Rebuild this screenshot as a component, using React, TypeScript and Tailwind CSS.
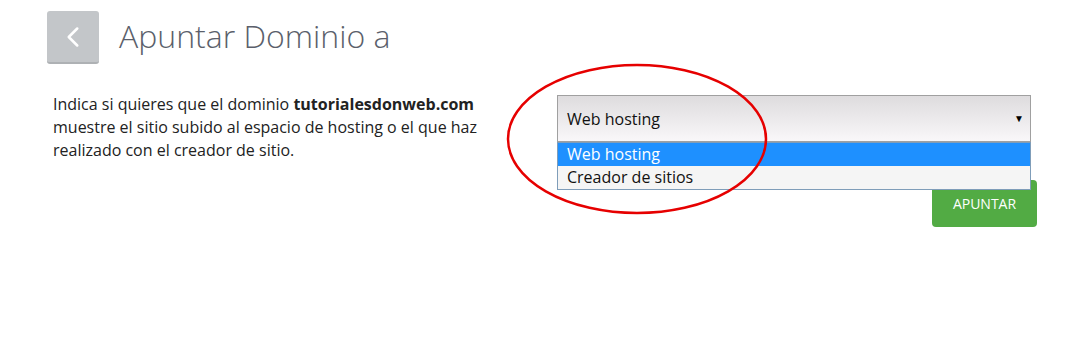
import { ChevronLeft } from "lucide-react";

export default function App() {
  return (
    <div className="relative w-[1068px] h-[364px] bg-white font-['Open_Sans',sans-serif] overflow-hidden">
      {/* header */}
      <div className="flex items-center gap-5 pl-[47px] pt-[11px]">
        <button className="w-[52px] h-[53px] rounded-[3px] bg-[#c3c6c9] border-b-2 border-[#aeb1b4] flex items-center justify-center">
          <ChevronLeft size={34} strokeWidth={1.8} className="text-white" />
        </button>
        <h1 className="text-[32px] font-light text-[#5b5f6b] leading-none -mt-1">Apuntar Dominio a</h1>
      </div>

      {/* body */}
      <div className="flex pl-[53px] pt-[29px]">
        <p className="w-[440px] text-[16px] leading-[23px] text-[#222]">
          Indica si quieres que el dominio <strong className="font-bold">tutorialesdonweb.com</strong> muestre el sitio subido al espacio de hosting o el que haz realizado con el creador de sitio.
        </p>
        <div className="ml-[64px] mt-[2px] w-[480px] flex flex-col items-end">
          <div className="relative w-[474px] self-start">
            <div className="h-[47px] border border-[#a0a0a0] bg-gradient-to-b from-[#dedcde] to-[#f9f7f9] flex items-center justify-between pl-[9px] pr-[6px]">
              <span className="text-[16px] text-[#111]">Web hosting</span>
              <span className="text-[10px] text-black">▼</span>
            </div>
            <div className="absolute left-0 right-0 top-[47px] border border-[#7f9db9] bg-[#f5f5f5] text-[16px] z-10">
              <div className="h-[23px] bg-[#1e90ff] text-white pl-[9px] leading-[23px]">Web hosting</div>
              <div className="h-[23px] text-[#111] pl-[9px] leading-[23px]">Creador de sitios</div>
            </div>
          </div>
          <button className="mt-[38px] w-[105px] h-[47px] rounded-[4px] bg-[#52ab44] text-white text-[14px]">APUNTAR</button>
        </div>
      </div>

      {/* annotation */}
      <svg className="absolute left-0 top-0 pointer-events-none z-20" width="1068" height="364">
        <ellipse cx="637" cy="139" rx="129" ry="74" fill="none" stroke="#e60000" strokeWidth="2.5" />
      </svg>
    </div>
  );
}
